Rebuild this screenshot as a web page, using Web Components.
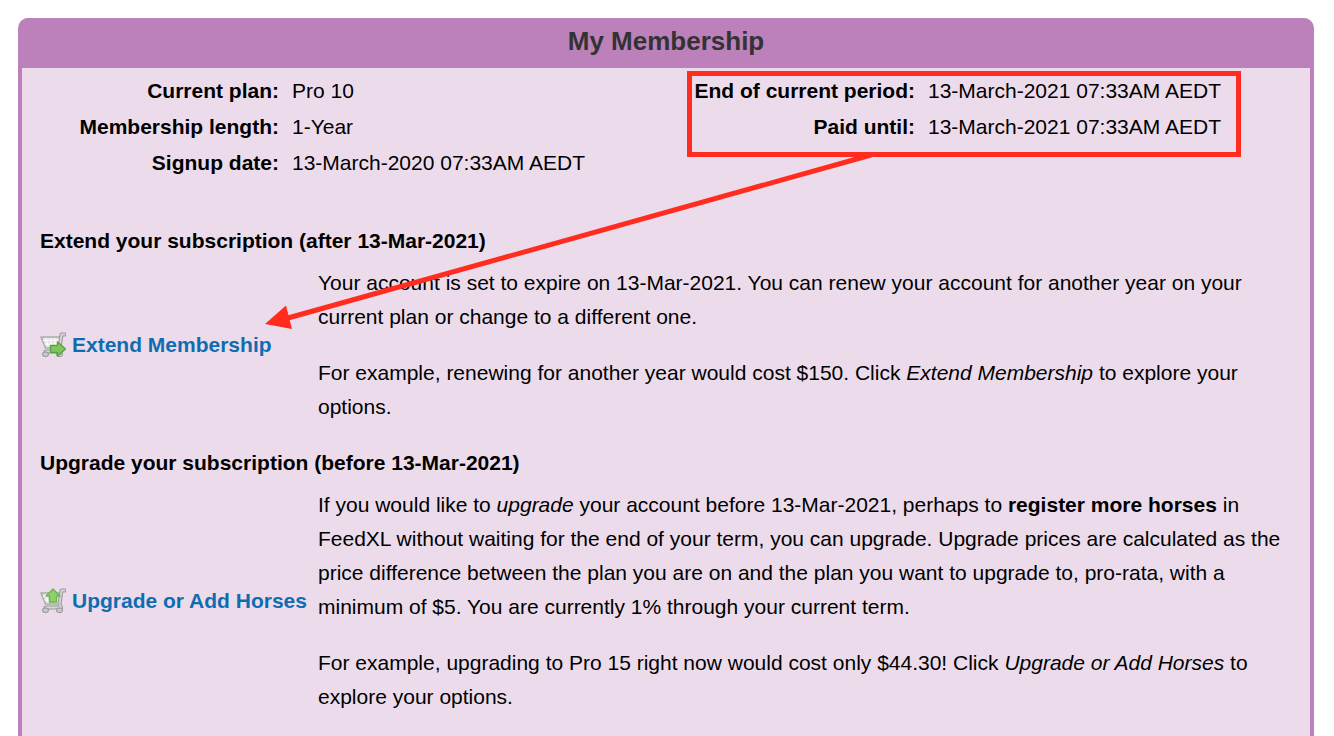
<!DOCTYPE html>
<html lang="en">
<head>
<meta charset="utf-8">
<title>My Membership</title>
<style>
body {
  margin: 0;
  padding: 18px 20px 0 18px;
  background: #fff;
  color: #000;
  font: 21px/34px "Liberation Sans", Arial, sans-serif;
}
</style>
</head>
<body>

<member-panel>
  <span slot="title">My Membership</span>

  <member-facts>
    <fact-list>
      <fact-row label="Current plan:">Pro 10</fact-row>
      <fact-row label="Membership length:">1-Year</fact-row>
      <fact-row label="Signup date:">13-March-2020 07:33AM AEDT</fact-row>
    </fact-list>
    <fact-list>
      <fact-row label="End of current period:">13-March-2021 07:33AM AEDT</fact-row>
      <fact-row label="Paid until:">13-March-2021 07:33AM AEDT</fact-row>
    </fact-list>
  </member-facts>

  <member-action link="Extend Membership" icon="extend">
    <span slot="heading">Extend your subscription (after 13-Mar-2021)</span>
    <div>Your account is set to expire on 13-Mar-2021. You can renew your account for another year on your current plan or change to a different one.</div>
    <div>For example, renewing for another year would cost $150. Click <i>Extend Membership</i> to explore your options.</div>
  </member-action>

  <member-action link="Upgrade or Add Horses" icon="upgrade">
    <span slot="heading">Upgrade your subscription (before 13-Mar-2021)</span>
    <div>If you would like to <i>upgrade</i> your account before 13-Mar-2021, perhaps to <b>register more horses</b> in FeedXL without waiting for the end of your term, you can upgrade. Upgrade prices are calculated as the price difference between the plan you are on and the plan you want to upgrade to, pro-rata, with a minimum of $5. You are currently 1% through your current term.</div>
    <div>For example, upgrading to Pro 15 right now would cost only $44.30! Click <i>Upgrade or Add Horses</i> to explore your options.</div>
  </member-action>

  <callout-arrow slot="overlay"></callout-arrow>
</member-panel>

<script>
(function () {
    function define(name, html, setup) {
        const tmpl = document.createElement('template');
        tmpl.innerHTML = html;

        customElements.define(name, class extends HTMLElement {
            constructor() {
                super();
                this.attachShadow({mode: "open"}).appendChild(tmpl.content.cloneNode(true));
            }
            connectedCallback() {
                if (setup) setup(this, this.shadowRoot);
            }
        });
    }

    define('member-panel', `<style>
    :host {
      display: block;
      position: relative;
      border: 4px solid #bc80bb;
      border-width: 0 4px;
      border-radius: 10px 10px 0 0;
      background: #ecdceb;
    }
    h1 {
      margin: 0;
      padding: 6px 0 10px;
      border-radius: 6px 6px 0 0;
      background: #bc80bb;
      color: #333;
      font-size: 26px;
      line-height: 34px;
      text-align: center;
    }
    .body {
      display: flex;
      flex-direction: column;
      gap: 22px;
      padding: 5px 18px 22px;
    }
    </style>
    <h1><slot name="title"></slot></h1>
    <div class="body"><slot></slot></div>
    <slot name="overlay"></slot>`);

    define('member-facts', `<style>
    :host {
      display: grid;
      grid-template-columns: 1fr 1fr;
      margin: 0 -10px 21px;
    }
    </style>
    <slot></slot>`);

    define('fact-list', `<style>
    :host { display: block; }
    </style>
    <slot></slot>`);

    define('fact-row', `<style>
    :host { display: block; }
    dl {
      display: grid;
      grid-template-columns: 249px 1fr;
      column-gap: 13px;
      margin: 0;
      line-height: 36px;
    }
    dt {
      font-weight: bold;
      text-align: right;
    }
    dd { margin: 0; }
    </style>
    <dl><dt></dt><dd><slot></slot></dd></dl>`, (el, root) => {
        root.querySelector('dt').textContent = el.getAttribute('label');
    });

    define('member-action', `<style>
    :host { display: block; }
    h2 {
      margin: 0 0 8px;
      font-size: 21px;
      line-height: 34px;
    }
    .row {
      display: grid;
      grid-template-columns: 278px 1fr;
      align-items: center;
    }
    a {
      display: flex;
      align-items: center;
      gap: 6px;
      color: #106cb1;
      font-weight: bold;
      text-decoration: none;
      white-space: nowrap;
    }
    a:hover { text-decoration: underline; }
    .text {
      display: flex;
      flex-direction: column;
      gap: 22px;
    }
    </style>
    <h2><slot name="heading"></slot></h2>
    <div class="row">
      <a href="#"><cart-icon></cart-icon><span></span></a>
      <div class="text"><slot></slot></div>
    </div>`, (el, root) => {
        root.querySelector('span').textContent = el.getAttribute('link');
        root.querySelector('cart-icon').setAttribute('kind', el.getAttribute('icon'));
    });

    define('cart-icon', `<style>
    :host { display: block; width: 26px; height: 26px; }
    svg { display: block; }
    .arrow { display: none; }
    :host([kind="extend"]) .right,
    :host([kind="upgrade"]) .up { display: block; }
    </style>
    <svg width="26" height="26" viewBox="0 0 26 26" aria-hidden="true">
      <path d="M1 5H20.500L19 16H5.500Z" fill="#e2e0e2" stroke="#aaa" stroke-width="1.600" stroke-linejoin="round"/>
      <path d="M3 8.500H19M4.500 12H19M6 6L8 15M10.500 6L11.500 15M15 6V15" stroke="#f8f8f8" stroke-width="1.500" fill="none"/>
      <path d="M24.500 2.500H21.500L19.500 16L21 19.500H5.500" fill="none" stroke="#999" stroke-width="4" stroke-linecap="round" stroke-linejoin="round"/>
      <path d="M24.500 2.500H21.500L19.500 16L21 19.500H5.500" fill="none" stroke="#d8d6d8" stroke-width="1.800" stroke-linecap="round" stroke-linejoin="round"/>
      <path d="M7 16.500H18" stroke="#bbb" stroke-width="2"/>
      <rect x="2.500" y="20" width="6" height="4.500" rx="2.200" fill="#c9c7c9" stroke="#929092"/>
      <rect x="16.500" y="20" width="6" height="4.500" rx="2.200" fill="#c9c7c9" stroke="#929092"/>
      <path class="arrow right" d="M10.500 13.500H17.500V10L25.500 17L17.500 24V20.500H10.500Z" fill="#83c55b" stroke="#58a33c" stroke-width="1.400" stroke-linejoin="round"/>
      <path class="arrow up" d="M13 1L20 8H16.500V14H9.500V8H6Z" fill="#8fd06d" stroke="#6db354" stroke-width="1.400" stroke-linejoin="round"/>
    </svg>`);

    // red box round the dates, with an arrow down to the extend link
    define('callout-arrow', `<style>
    :host {
      position: absolute;
      top: 0;
      left: 0;
      pointer-events: none;
    }
    svg { display: block; }
    </style>
    <svg width="1240" height="330" viewBox="0 0 1240 330" aria-hidden="true">
      <rect x="667.500" y="55.500" width="549" height="81" fill="none" stroke="#ff2c1f" stroke-width="5"/>
      <path d="M849 137L266 300" stroke="#ff2c1f" stroke-width="5"/>
      <path d="M243 306L264 287.500L270 311Z" fill="#ff2c1f"/>
    </svg>`);
})();
</script>
</body>
</html>
